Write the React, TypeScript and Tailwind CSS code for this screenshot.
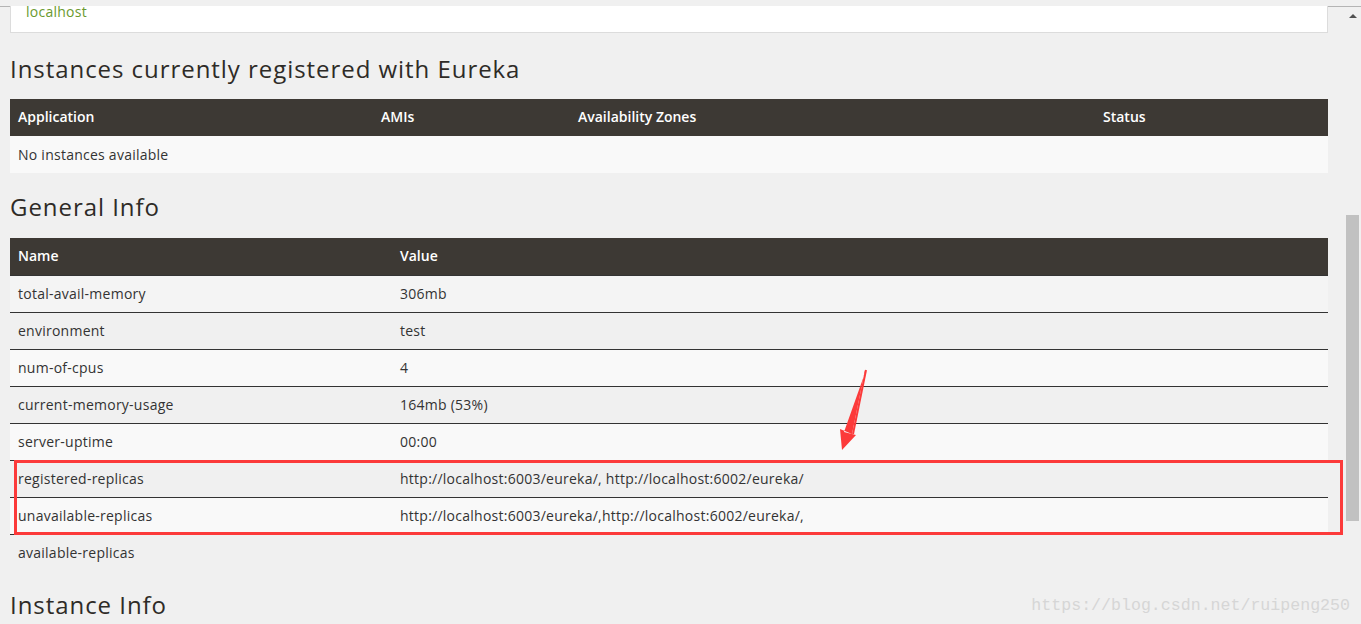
import React from "react";

const font = { fontFamily: '"Open Sans", "DejaVu Sans", sans-serif' };

const info: [string, string][] = [
  ["total-avail-memory", "306mb"],
  ["environment", "test"],
  ["num-of-cpus", "4"],
  ["current-memory-usage", "164mb (53%)"],
  ["server-uptime", "00:00"],
  ["registered-replicas", "http://localhost:6003/eureka/, http://localhost:6002/eureka/"],
  ["unavailable-replicas", "http://localhost:6003/eureka/,http://localhost:6002/eureka/,"],
  ["available-replicas", ""],
];

const rowBg = ["bg-[#f4f4f4]", "", "bg-[#f9f9f9]", "", "bg-[#f9f9f9]", "", "bg-[#f9f9f9]", ""];

function Heading({ children, first }: { children: React.ReactNode; first?: boolean }) {
  return (
    <h2
      className={`${first ? "mt-[23px] mb-[17px]" : "mt-[21px] mb-[18px]"} text-[24px] leading-[26px] text-[#2e2b27] font-medium tracking-[0.95px]`}
    >
      {children}
    </h2>
  );
}

export default function App() {
  return (
    <div className="relative w-[1361px] h-[624px] overflow-hidden bg-[#f0f0f0] text-[#333]" style={font}>
      <div className="h-[6px]" />
      <div className="border-t border-[#b4b4b4] flex">
        <main className="w-[1344px] pl-[10px] pr-[16px] tracking-[0.25px]">
          {/* top box */}
          <div className="h-[27px] bg-white border border-t-0 border-[#dcdcdc] pl-[15px]">
            <span className="block text-[14px] leading-[12px] -mt-[1px] text-[#6a9a2e]">localhost</span>
          </div>

          <Heading first>Instances currently registered with Eureka</Heading>

          <div className="grid grid-cols-[363px_197px_525px_233px] bg-[#3d3934] text-white text-[14px] font-semibold tracking-normal h-[37px] items-center pb-[2px]">
            <div className="pl-[8px]">Application</div>
            <div className="pl-[8px]">AMIs</div>
            <div className="pl-[8px]">Availability Zones</div>
            <div className="pl-[8px]">Status</div>
          </div>
          <div className="h-[37px] bg-[#f9f9f9] flex items-center pl-[8px] pb-[1px] text-[14px]">No instances available</div>

          <Heading>General Info</Heading>

          <div className="grid grid-cols-[382px_1fr] bg-[#3d3934] text-white text-[14px] font-semibold tracking-normal h-[37px] items-center pb-[2px]">
            <div className="pl-[8px]">Name</div>
            <div className="pl-[8px]">Value</div>
          </div>
          {info.map(([k, v], i) => (
            <div
              key={k}
              className={`grid grid-cols-[382px_1fr] h-[37px] items-center border-t border-[#333] text-[14px] pb-[1px] ${rowBg[i]}`}
            >
              <div className="pl-[8px]">{k}</div>
              <div className="pl-[8px]">{v}</div>
            </div>
          ))}

          <Heading>Instance Info</Heading>
        </main>

        {/* scrollbar */}
        <div className="w-[17px] relative">
          <div className="absolute left-[5px] top-[7px] w-0 h-0 border-l-[4px] border-r-[4px] border-b-[4px] border-l-transparent border-r-transparent border-b-[#505050]" />
          <div className="absolute left-[2px] top-[208px] w-[13px] h-[306px] bg-[#c1c1c1]" />
        </div>
      </div>

      {/* red highlight box */}
      <div className="absolute left-[14px] top-[460px] w-[1329px] h-[75px] border-[3px] border-[#fc3a3a]" />

      {/* arrow */}
      <svg className="absolute left-[830px] top-[365px]" width="45" height="90" viewBox="0 0 45 90">
        <path d="M36 5 L35 5 L22 69 L10 64 L12 85 L26 70 L14 67 Z" fill="#fc3a3a" />
        <path d="M36 5 L23 69" stroke="#fc3a3a" strokeWidth="2" />
      </svg>

      <div
        className="absolute right-[11px] top-[594px] text-[16.6px] text-[#d6d6d6]"
        style={{ fontFamily: '"Liberation Mono", monospace' }}
      >
        https://blog.csdn.net/ruipeng250
      </div>
    </div>
  );
}
